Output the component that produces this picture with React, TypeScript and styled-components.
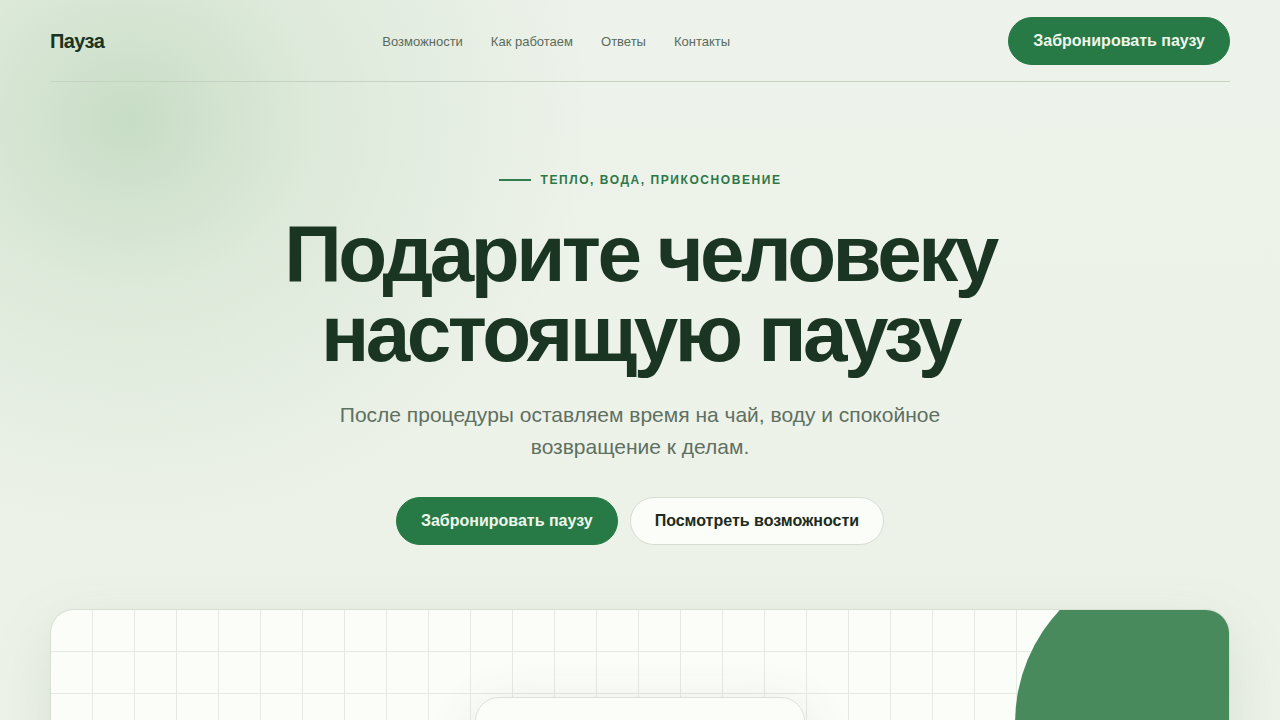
import React from "react";
import styled, { createGlobalStyle } from "styled-components";

const GlobalStyle = createGlobalStyle`
  * { box-sizing: border-box; }
  html, body { margin: 0; padding: 0; }
  body {
    font-family: "Liberation Sans", Arial, sans-serif;
    background: #eef3ea;
    overflow: hidden;
  }
`;

const Page = styled.div`
  position: relative;
  min-height: 720px;
  overflow: hidden;
  background:
    radial-gradient(ellipse 460px 420px at 130px 120px, rgba(196, 219, 193, 0.9) 0%, rgba(208, 226, 205, 0.55) 40%, rgba(230, 238, 226, 0) 100%),
    linear-gradient(180deg, #edf2ea 0%, #edf2e9 60%, #eff4ec 100%);
`;

const Container = styled.div`
  width: 1180px;
  margin: 0 auto;
`;

const Header = styled.header`
  display: flex;
  align-items: center;
  justify-content: space-between;
  padding: 17px 0 16px;
  border-bottom: 1px solid #c5d1c3;
`;

const Logo = styled.div`
  font-size: 20px;
  font-weight: 700;
  letter-spacing: -0.03em;
  color: #1b3322;
`;

const Nav = styled.nav`
  display: flex;
  gap: 28px;
`;

const NavLink = styled.a`
  font-size: 13px;
  color: #5a6b5d;
  text-decoration: none;
`;

const Button = styled.a<{ $variant?: "primary" | "ghost" }>`
  display: inline-flex;
  align-items: center;
  justify-content: center;
  height: 48px;
  padding: 0 24px;
  border-radius: 24px;
  font-size: 16px;
  font-weight: 700;
  text-decoration: none;
  white-space: nowrap;
  background: ${(p) => (p.$variant === "ghost" ? "#fbfdf8" : "#277a46")};
  color: ${(p) => (p.$variant === "ghost" ? "#1c2b20" : "#eef6ea")};
  border: 1px solid ${(p) => (p.$variant === "ghost" ? "#d6ddd2" : "#277a46")};
`;

const Hero = styled.section`
  display: flex;
  flex-direction: column;
  align-items: center;
  text-align: center;
  padding-top: 90px;
`;

const Eyebrow = styled.div`
  display: flex;
  align-items: center;
  gap: 10px;
  font-size: 12px;
  line-height: 16px;
  font-weight: 700;
  letter-spacing: 0.13em;
  text-transform: uppercase;
  color: #2d7748;
  &::before {
    content: "";
    width: 32px;
    height: 2px;
    background: #2f7d4b;
  }
`;

const Title = styled.h1`
  margin: 26px 0 0;
  font-size: 80px;
  line-height: 80px;
  font-weight: 700;
  letter-spacing: -0.044em;
  color: #1a3522;
`;

const Lead = styled.p`
  margin: 25px 0 0;
  max-width: 640px;
  font-size: 21px;
  line-height: 32px;
  color: #5e7062;
`;

const Actions = styled.div`
  display: flex;
  gap: 12px;
  margin-top: 34px;
`;

const Showcase = styled.div`
  position: relative;
  margin-top: 64px;
  height: 420px;
  border-radius: 24px;
  border: 1px solid #d8dfd5;
  overflow: hidden;
  background-color: #fbfdf8;
  background-image:
    linear-gradient(to right, #e5eae3 1px, transparent 1px),
    linear-gradient(to bottom, #e5eae3 1px, transparent 1px);
  background-size: 42px 42px;
  background-position: -1px -1px;
  box-shadow: 0 20px 60px rgba(70, 110, 70, 0.14);
`;

const Blob = styled.div`
  position: absolute;
  top: -52px;
  right: -116px;
  width: 330px;
  height: 330px;
  border-radius: 50%;
  background: #488a5c;
`;

const Panel = styled.div`
  position: absolute;
  top: 87px;
  left: 50%;
  transform: translateX(-50%);
  width: 330px;
  height: 240px;
  border-radius: 24px;
  border: 1px solid #dce2d9;
  background: #fbfdf9;
  box-shadow: 0 10px 50px rgba(80, 110, 80, 0.12);
`;

export default function App() {
  return (
    <Page>
      <GlobalStyle />
      <Container>
        <Header>
          <Logo>Пауза</Logo>
          <Nav>
            <NavLink href="#">Возможности</NavLink>
            <NavLink href="#">Как работаем</NavLink>
            <NavLink href="#">Ответы</NavLink>
            <NavLink href="#">Контакты</NavLink>
          </Nav>
          <Button href="#">Забронировать паузу</Button>
        </Header>
        <Hero>
          <Eyebrow>Тепло, вода, прикосновение</Eyebrow>
          <Title>
            Подарите человеку
            <br />
            настоящую паузу
          </Title>
          <Lead>
            После процедуры оставляем время на чай, воду и спокойное
            <br />
            возвращение к делам.
          </Lead>
          <Actions>
            <Button href="#">Забронировать паузу</Button>
            <Button href="#" $variant="ghost">
              Посмотреть возможности
            </Button>
          </Actions>
        </Hero>
        <Showcase>
          <Blob />
          <Panel />
        </Showcase>
      </Container>
    </Page>
  );
}
